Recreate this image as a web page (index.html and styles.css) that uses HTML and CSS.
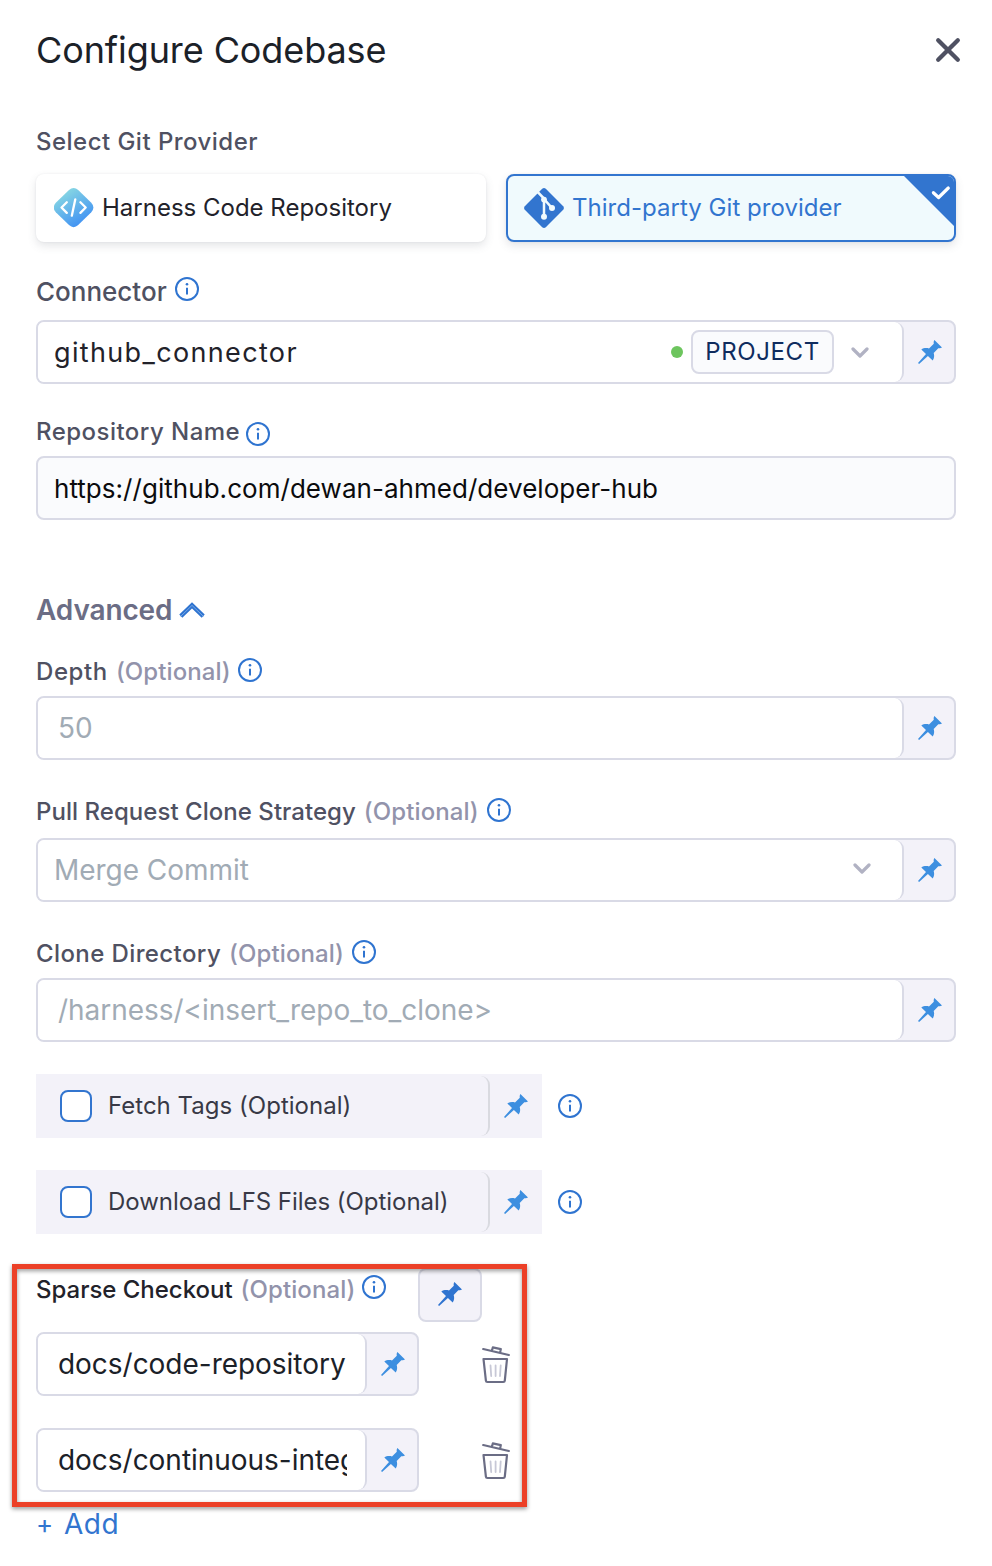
FILE: index.html
```html
<!DOCTYPE html>
<html lang="en">
<head>
<meta charset="utf-8">
<title>Configure Codebase</title>
<link rel="stylesheet" href="styles.css">
</head>
<body>
<svg class="defs" width="0" height="0" aria-hidden="true">
  <symbol id="info" viewBox="0 0 24 24">
    <circle cx="12" cy="12" r="11" fill="none" stroke="currentColor" stroke-width="2"/>
    <circle cx="12" cy="7.200" r="1.300" fill="currentColor"/>
    <path d="M12 10.800v6.700" stroke="currentColor" stroke-width="2"/>
  </symbol>
  <symbol id="pin" viewBox="0 0 24 24">
    <path fill="currentColor" d="M16.4 0 24 7.6c-1.2.9-2.500.8-3.700.6L15.700 13c.8 2.500.6 5.200-1 7.600L9.900 16 1.100 24 0 22.900 8 14.100 3.300 9.400c2.200-1.500 5-1.800 7.700-1l4.800-4.600c-.3-1.400-.1-2.700.6-3.800z"/>
  </symbol>
  <symbol id="chevron" viewBox="0 0 18 11">
    <path d="M2 2l7 7 7-7" fill="none" stroke="currentColor" stroke-width="3.200" stroke-linecap="round" stroke-linejoin="round"/>
  </symbol>
  <symbol id="trash" viewBox="0 0 28 38">
    <g fill="none" stroke="currentColor" stroke-width="2.200" stroke-linecap="round" stroke-linejoin="round">
      <path d="M1.200 3l25.600 6M10 4.600l.8-3.200 8 1.700-.7 3.400"/>
      <path d="M1.500 13h23.500l-2.200 21.600q-.1 1.400-1.500 1.400H5.400q-1.400 0-1.500-1.400z"/>
      <path d="M8.500 19.500l.7 10.500M13.600 19.500V30M18.700 19.500L18 30" stroke="#c7c8d6" stroke-width="1.800"/>
    </g>
  </symbol>
</svg>

<main class="panel">
  <header class="header">
    <h1 class="title">Configure Codebase</h1>
    <svg class="close" viewBox="0 0 26 26"><path d="M3.200 3.200l19.600 19.600M22.800 3.200L3.200 22.800" stroke="currentColor" stroke-width="4.300" stroke-linecap="round"/></svg>
  </header>

  <div class="label provider-label"><span class="wide">Select Git Provider</span></div>
  <div class="cards">
    <div class="card">
      <svg class="card-icon" viewBox="0 0 40 40">
        <defs><linearGradient id="hc" x1=".25" y1=".1" x2=".75" y2=".9"><stop offset="0" stop-color="#86d6e3"/><stop offset="1" stop-color="#4192f3"/></linearGradient></defs>
        <path fill="url(#hc)" d="M15 2.100q4.600-4.200 9.200 0L37.300 14.800q4.200 4.700 0 9.400L24.200 37.100q-4.600 4.200-9.200 0L1.800 24.200q-4.200-4.700 0-9.400z"/>
        <path d="M12.800 14.300L7.500 19.500l5.300 5.400M26.400 14.300l5.300 5.200-5.300 5.400M21.300 11.300l-3.500 16.400" fill="none" stroke="#fff" stroke-width="2.300" stroke-linecap="round" stroke-linejoin="round"/>
      </svg>
      <span class="card-text">Harness Code Repository</span>
    </div>
    <div class="card card-selected">
      <svg class="card-icon" viewBox="0 0 40 40">
        <path fill="#3275cf" d="M18.200.8q1.800-1.400 3.600 0L39.200 18.200q1.400 1.800 0 3.600L21.800 39.200q-1.800 1.400-3.600 0L.8 21.800q-1.400-1.800 0-3.600z"/>
        <path d="M13.600 3.800l6.400 6.800v18.400M20 11l7.800 8.800" fill="none" stroke="#f0fafd" stroke-width="2.500"/>
        <g fill="#f0fafd"><circle cx="20" cy="11.600" r="2.900"/><circle cx="20" cy="28.800" r="3"/><circle cx="28" cy="20" r="3"/></g>
      </svg>
      <span class="card-text third">Third-party Git provider</span>
      <svg class="corner" viewBox="0 0 50 50"><path fill="#3275cf" d="M0 0h50v50z"/><path d="M29.400 16.700l5.200 4.800 9.700-9.500" fill="none" stroke="#fff" stroke-width="3.200" stroke-linecap="round" stroke-linejoin="round"/></svg>
    </div>
  </div>

  <div class="label connector-label">Connector<svg class="info up3"><use href="#info"/></svg></div>
  <div class="field">
    <div class="field-main"><span class="connector-value">github_connector</span><i class="dot"></i><span class="badge">PROJECT</span><svg class="chevron"><use href="#chevron"/></svg></div>
    <div class="field-pin"><svg class="pin"><use href="#pin"/></svg></div>
  </div>

  <div class="label repo-label"><span class="wide">Repository Name</span><svg class="info down2"><use href="#info"/></svg></div>
  <div class="field field-plain"><span class="repo-value">https://github.com/dewan-ahmed/developer-hub</span></div>

  <div class="advanced">Advanced<svg class="advanced-chevron" viewBox="0 0 26 16"><path d="M1.800 14.200L13 3.400l11.200 10.800" fill="none" stroke="#2f74d0" stroke-width="4.400"/><path d="M1.500 14.500L13 3.400l11.500 11.100" fill="none" stroke="#8ab5ea" stroke-width=".8"/></svg></div>

  <div class="label depth-label"><span class="depth">Depth</span><span class="optional">(Optional)</span><svg class="info up2"><use href="#info"/></svg></div>
  <div class="field">
    <div class="field-main inset"><span class="placeholder">50</span></div>
    <div class="field-pin"><svg class="pin"><use href="#pin"/></svg></div>
  </div>

  <div class="label strategy-label"><span class="strategy">Pull Request Clone Strategy</span><span class="optional">(Optional)</span><svg class="info up2"><use href="#info"/></svg></div>
  <div class="field">
    <div class="field-main"><span class="placeholder">Merge Commit</span><svg class="chevron select-chevron"><use href="#chevron"/></svg></div>
    <div class="field-pin"><svg class="pin"><use href="#pin"/></svg></div>
  </div>

  <div class="label directory-label"><span class="directory">Clone Directory</span><span class="optional">(Optional)</span><svg class="info up2"><use href="#info"/></svg></div>
  <div class="field">
    <div class="field-main inset"><span class="placeholder">/harness/&lt;insert_repo_to_clone&gt;</span></div>
    <div class="field-pin"><svg class="pin"><use href="#pin"/></svg></div>
  </div>

  <div class="check-row">
    <div class="check-bar">
      <div class="check-main"><i class="checkbox"></i><span class="check-text">Fetch Tags (Optional)</span></div>
      <svg class="pin"><use href="#pin"/></svg>
    </div>
    <svg class="info"><use href="#info"/></svg>
  </div>
  <div class="check-row">
    <div class="check-bar">
      <div class="check-main"><i class="checkbox"></i><span class="check-text tight">Download LFS Files (Optional)</span></div>
      <svg class="pin"><use href="#pin"/></svg>
    </div>
    <svg class="info"><use href="#info"/></svg>
  </div>

  <section class="sparse">
    <div class="sparse-head">
      <div class="label sparse-label"><span>Sparse Checkout</span><span class="optional">(Optional)</span><svg class="info up3"><use href="#info"/></svg></div>
      <div class="pin-button"><svg class="pin"><use href="#pin"/></svg></div>
    </div>
    <div class="sparse-row">
      <div class="field">
        <div class="field-main inset"><span class="path-value">docs/code-repository</span></div>
        <div class="field-pin"><svg class="pin"><use href="#pin"/></svg></div>
      </div>
      <svg class="trash"><use href="#trash"/></svg>
    </div>
    <div class="sparse-row">
      <div class="field">
        <div class="field-main inset"><span class="path-value">docs/continuous-integ</span></div>
        <div class="field-pin"><svg class="pin"><use href="#pin"/></svg></div>
      </div>
      <svg class="trash"><use href="#trash"/></svg>
    </div>
    <div class="highlight"></div>
  </section>
  <div class="add"><span class="plus">+</span><span>Add</span></div>
</main>
</body>
</html>
```
FILE: styles.css
```css
* { box-sizing: border-box; }
body { margin: 0; background: #fff; font-family: Inter, "Liberation Sans", sans-serif; color: #22222a; }
.defs { display: block; height: 0; }
svg { flex: none; }
.panel { height: 1566px; padding: 0 36px; overflow: hidden; }

.header { display: flex; align-items: center; justify-content: space-between; height: 100px; margin-right: -5px; }
.title { margin: 0; font-size: 36px; line-height: 44px; font-weight: 400; letter-spacing: -0.1px; color: #1b2128; }
.close { width: 26px; height: 26px; color: #4f5162; }

.label { display: flex; align-items: center; height: 32px; padding-top: 2px; font-size: 24px; line-height: 30px; font-weight: 500; color: #4f5162; white-space: nowrap; }
.wide { letter-spacing: 0.47px; }
.info { width: 24px; height: 24px; margin-left: 7px; color: #2f74d0; }
.up2 { margin-bottom: 5px; }
.up3 { margin-bottom: 7px; }
.down2 { margin-top: 3px; }
.optional { margin-left: 8px; letter-spacing: 0.1px; color: #9293ab; }

.provider-label { margin-top: 25px; }
.cards { display: grid; grid-template-columns: 1fr 1fr; gap: 20px; margin-top: 17px; }
.card { position: relative; display: flex; align-items: center; height: 68px; padding: 0 18px; border-radius: 8px; background: #fff; box-shadow: 0 0 2px rgba(40, 41, 61, .08), 0 4px 8px rgba(96, 97, 112, .16); font-size: 24px; line-height: 32px; }
.card-selected { padding: 0 16px; border: 2px solid #3275cf; background: #f0fafd; color: #3275cf; overflow: hidden; }
.card-icon { width: 40px; height: 40px; }
.card-text { margin-left: 8px; }
.third { letter-spacing: 0.03px; }
.corner { position: absolute; top: 0; right: 0; width: 50px; height: 50px; }

.connector-label { margin-top: 33px; font-size: 26px; }
.connector-label .info { margin-left: 8px; }
.field { display: flex; height: 64px; margin-top: 8px; border: 2px solid #d9dae6; border-radius: 8px; background: #f3f2f9; overflow: hidden; }
.connector-label + .field { margin-top: 13px; }
.field-main { display: flex; flex: 1; align-items: center; min-width: 0; padding: 0 33px 0 16px; border-right: 2px solid #d9dae6; border-radius: 0 9px 9px 0; background: #fff; font-size: 28px; line-height: 40px; white-space: nowrap; }
.inset { padding: 0 18px 0 20px; }
.field-pin { display: flex; align-items: center; justify-content: center; width: 50px; padding-left: 2px; }
.pin { width: 24px; height: 24px; color: #3d8fe0; }
.connector-value { padding-top: 2px; font-size: 27px; letter-spacing: 1.35px; }
.dot { width: 12px; height: 12px; margin-left: auto; border-radius: 50%; background: #6dc55e; }
.badge { display: flex; align-items: center; justify-content: center; width: 143px; height: 44px; margin: 0 17px 0 8px; padding-bottom: 1px; border: 2px solid #d9dae6; border-radius: 8px; background: #fafbfd; color: #0f2c5e; font-size: 24px; letter-spacing: 0.6px; }
.chevron { width: 18px; height: 11px; color: #b1b2c3; }
.select-chevron { margin: 0 -2px 3px auto; }
.placeholder { letter-spacing: -0.04px; color: #a1abb5; }

.repo-label { margin-top: 31px; }
.repo-label .info { margin-left: 6px; }
.repo-label + .field { margin-top: 9px; }
.field-plain { align-items: center; padding-left: 16px; background: #fafbfd; color: #0b0b0d; }
.repo-value { font-size: 26px; letter-spacing: 0.04px; }

.advanced { display: flex; align-items: center; height: 36px; margin-top: 72px; font-size: 28px; line-height: 36px; font-weight: 600; letter-spacing: -0.13px; color: #6b6d85; }
.advanced-chevron { width: 26px; height: 16px; margin-left: 7px; }

.depth-label { margin-top: 27px; }
.depth { letter-spacing: 0.6px; }
.depth-label + .field { margin-top: 9px; }
.strategy-label { margin-top: 35px; }
.strategy { letter-spacing: 0.04px; }
.strategy-label + .field { margin-top: 11px; }
.strategy-label .info, .directory-label .info { margin-left: 8px; }
.directory-label { margin-top: 35px; }
.directory { letter-spacing: 0.4px; }
.directory-label + .field { margin-top: 9px; }

.check-row { display: flex; align-items: center; height: 64px; margin-top: 32px; }
.check-row .info { margin-left: 16px; }
.check-bar { display: flex; align-items: center; width: 506px; height: 64px; background: #f3f2f9; }
.check-main { display: flex; align-items: center; width: 454px; height: 60px; padding-left: 24px; border-right: 2px solid #d9dae0; border-radius: 0 9px 9px 0; }
.checkbox { width: 32px; height: 32px; border: 2px solid #3275cf; border-radius: 8px; background: #fff; }
.check-text { margin-left: 16px; padding-bottom: 1px; font-size: 24px; line-height: 32px; letter-spacing: 0.02px; color: #383946; }
.tight { letter-spacing: -0.04px; }
.check-bar .pin { margin-left: 14px; }

.sparse { position: relative; height: 243px; margin-top: 30px; padding-top: 4px; }
.sparse-head { display: flex; height: 54px; }
.sparse-label { width: 382px; margin-top: 5px; color: #22222a; letter-spacing: -0.02px; }
.sparse-label .info { margin-left: 7px; }
.pin-button { display: flex; align-items: center; justify-content: center; width: 64px; height: 54px; padding-bottom: 2px; border: 2px solid #d9dae6; border-radius: 8px; background: #f3f2f9; }
.pin-button .pin { color: #2f74d0; }
.sparse-row { display: flex; align-items: center; height: 64px; margin-top: 10px; }
.sparse-row + .sparse-row { margin-top: 32px; }
.sparse-row .field { width: 383px; margin: 0; }
.path-value { overflow: hidden; color: #1b2128; letter-spacing: -0.03px; }
.trash { width: 28px; height: 38px; margin: 2px 0 0 63px; color: #6b6d85; }
.highlight { position: absolute; top: 0; left: -24px; width: 515px; height: 243px; border: 5px solid #ec4027; filter: drop-shadow(0 2px 2px rgba(0, 0, 0, .4)); }

.add { display: flex; align-items: center; height: 34px; font-size: 28px; line-height: 34px; color: #3275cf; letter-spacing: 0.5px; }
.plus { width: 28px; font-size: 26px; }
```
